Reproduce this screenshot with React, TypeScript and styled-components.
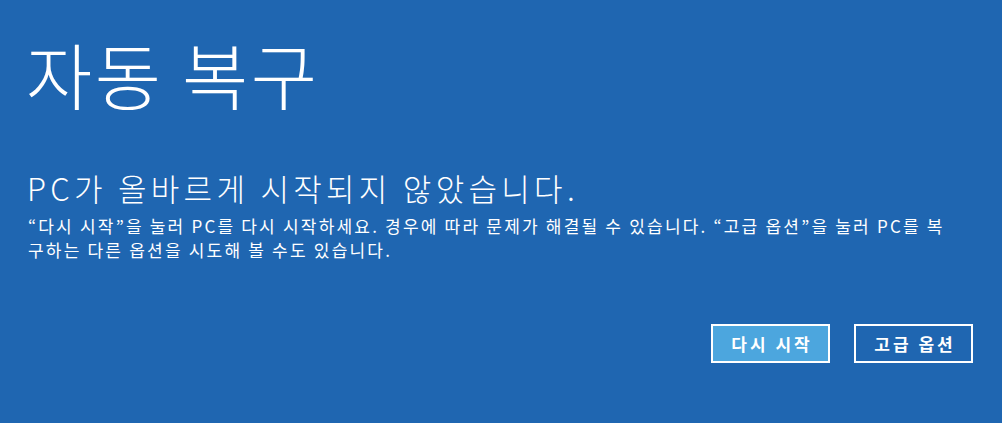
import React from "react";
import styled, { createGlobalStyle } from "styled-components";

const Global = createGlobalStyle`
  html, body { margin: 0; padding: 0; background: #1f66b1; }
  body { font-family: "Noto Sans CJK KR", "Noto Sans", sans-serif; color: #fff; }
`;

const Screen = styled.div`
  width: 1002px;
  height: 423px;
  box-sizing: border-box;
  background: #1f66b1;
  padding: 28px 29px 0 28px;
  display: flex;
  flex-direction: column;
  overflow: hidden;
`;

const Title = styled.h1`
  margin: 0 0 0 -2px;
  font-size: 72px;
  font-weight: 300;
  line-height: 90px;
  letter-spacing: 2.5px;
`;

const Heading = styled.h2`
  margin: 50px 0 0 -1px;
  font-size: 31px;
  font-weight: 300;
  line-height: 40px;
  letter-spacing: 4.3px;
`;

const Body = styled.p`
  margin: 6px 0 0;
  font-size: 17px;
  font-weight: 400;
  line-height: 24px;
  letter-spacing: 2.2px;
  white-space: nowrap;
`;

const Line = styled.span`
  display: block;
`;

const Actions = styled.div`
  display: flex;
  justify-content: flex-end;
  gap: 24px;
  margin-top: 62px;
`;

const Button = styled.button<{ $primary?: boolean }>`
  width: 119px;
  height: 39px;
  box-sizing: border-box;
  border: 2px solid #fff;
  background: ${(p) => (p.$primary ? "#4ca6de" : "#1f66b1")};
  color: #fff;
  font-family: "Noto Sans CJK KR", sans-serif;
  font-size: 17px;
  font-weight: 700;
  letter-spacing: 3px;
  text-indent: 3px;
  padding: 0;
  cursor: pointer;
`;

export default function App() {
  return (
    <>
      <Global />
      <Screen>
        <Title>자동 복구</Title>
        <Heading>PC가 올바르게 시작되지 않았습니다.</Heading>
        <Body>
          <Line>“다시 시작”을 눌러 PC를 다시 시작하세요. 경우에 따라 문제가 해결될 수 있습니다. “고급 옵션”을 눌러 PC를 복</Line>
          <Line>구하는 다른 옵션을 시도해 볼 수도 있습니다.</Line>
        </Body>
        <Actions>
          <Button $primary>다시 시작</Button>
          <Button>고급 옵션</Button>
        </Actions>
      </Screen>
    </>
  );
}
